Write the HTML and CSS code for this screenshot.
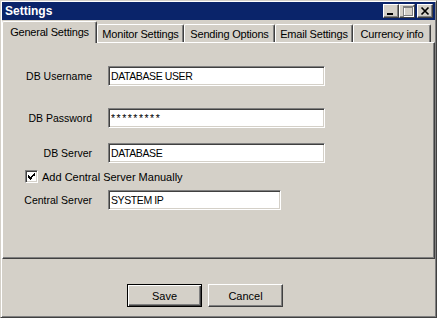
FILE: index.html
```html
<!DOCTYPE html>
<html lang="en">
<head>
    <meta charset="UTF-8">
    <meta name="viewport" content="width=device-width, initial-scale=1.0">
    <title>Settings</title>
    <link rel="stylesheet" href="styles.css">
</head>
<body>
    <div class="window">
        <div class="titlebar">
            <span class="title">Settings</span>
            <div class="caption-btns">
                <span class="cap-btn">
                    <svg width="14" height="12" viewBox="0 0 14 12" shape-rendering="crispEdges"><rect x="3" y="8" width="6" height="2" fill="#000"/></svg>
                </span>
                <span class="cap-btn">
                    <svg width="14" height="12" viewBox="0 0 14 12" shape-rendering="crispEdges">
                        <rect x="4" y="2" width="9" height="9" fill="none" stroke="#fff"/>
                        <rect x="3" y="1" width="9" height="9" fill="none" stroke="#808080"/>
                        <rect x="3" y="2" width="9" height="1" fill="#808080"/>
                    </svg>
                </span>
                <span class="cap-btn close">
                    <svg width="14" height="12" viewBox="0 0 14 12"><path d="M3.5 2.5 L10.5 9.5 M10.5 2.5 L3.5 9.5" stroke="#000" stroke-width="1.7"/></svg>
                </span>
            </div>
        </div>

        <div class="tabs">
            <div class="tab active">General Settings</div>
            <div class="tab tab-monitor">Monitor Settings</div>
            <div class="tab tab-sending">Sending Options</div>
            <div class="tab tab-email">Email Settings</div>
            <div class="tab tab-currency">Currency info</div>
        </div>

        <div class="panel">
            <div class="row row-user">
                <label>DB Username</label>
                <input type="text" class="field" value="DATABASE USER">
            </div>
            <div class="row row-pass">
                <label>DB Password</label>
                <input type="text" class="field password" value="*********">
            </div>
            <div class="row row-server">
                <label>DB Server</label>
                <input type="text" class="field" value="DATABASE">
            </div>
            <div class="check-row">
                <span class="checkbox">
                    <svg width="9" height="9" viewBox="0 0 9 9" shape-rendering="crispEdges">
                        <path d="M1 3h1v1h-1zM1 4h2v1h-2zM1 5h3v1h-3zM2 6h3v1h-3zM3 7h1v1h-1zM4 5h1v1h-1zM4 4h2v1h-2zM5 3h2v1h-2zM6 2h1v1h-1zM7 1h1v3h-1z" fill="#000"/>
                    </svg>
                </span>
                <span>Add Central Server Manually</span>
            </div>
            <div class="row row-central">
                <label>Central Server</label>
                <input type="text" class="field short" value="SYSTEM IP">
            </div>
        </div>

        <div class="footer">
            <button class="btn default">Save</button>
            <button class="btn">Cancel</button>
        </div>
    </div>
</body>
</html>
```

FILE: styles.css
```css
/* Basic reset */
* {
    margin: 0;
    padding: 0;
    box-sizing: border-box;
}

body {
    font-family: "Liberation Sans", Arial, sans-serif;
    font-size: 10.5px;
    color: #000;
    background-color: #d4d0c8;
    width: 437px;
    height: 318px;
    overflow: hidden;
}

/* Window frame */
.window {
    width: 437px;
    height: 318px;
    border: 1px solid;
    border-color: #d4d0c8 #404040 #404040 #d4d0c8;
    box-shadow: inset 1px 1px #fff, inset -1px -1px #808080;
    padding: 1px;
    display: flex;
    flex-direction: column;
}

/* Title bar */
.titlebar {
    height: 18px;
    background-color: #0a246a;
    display: flex;
    align-items: center;
    justify-content: space-between;
    padding: 0 2px 0 3px;
}

.title {
    color: #fff;
    font-weight: bold;
    font-size: 12px;
}

.caption-btns {
    display: flex;
    align-items: center;
}

.cap-btn {
    width: 16px;
    height: 14px;
    background-color: #d4d0c8;
    border: 1px solid;
    border-color: #fff #404040 #404040 #fff;
    box-shadow: inset -1px -1px #808080;
    display: flex;
}

.cap-btn.close {
    margin-left: 2px;
}

/* Tabs */
.tabs {
    height: 22px;
    display: flex;
    align-items: flex-end;
    position: relative;
    z-index: 1;
}

.tab {
    height: 18px;
    display: flex;
    align-items: center;
    justify-content: center;
    border-top: 1px solid #fff;
    border-left: 1px solid #fff;
    border-right: 1px solid #404040;
    box-shadow: inset -1px 0 #808080;
    border-radius: 2px 2px 0 0;
    white-space: nowrap;
    font-size: 11px;
    letter-spacing: -0.2px;
}

.tab.active {
    width: 95px;
    height: 22px;
    margin-bottom: -1px;
    background-color: #d4d0c8;
    padding-bottom: 1px;
}

.tab-monitor { width: 87px; }
.tab-sending { width: 91px; }
.tab-email { width: 78px; }
.tab-currency { width: 78px; }

/* Tab page */
.panel {
    height: 217px;
    border: 1px solid;
    border-color: #fff #404040 #404040 #fff;
    box-shadow: inset -1px -1px #808080;
    display: flex;
    flex-direction: column;
}

.row {
    display: flex;
    align-items: center;
}

.row label {
    width: 89px;
    margin-right: 16px;
    text-align: right;
}

.row-user { margin-top: 23px; }
.row-pass { margin-top: 22px; }
.row-server { margin-top: 15px; }
.row-central { margin-top: 7px; }

.field {
    width: 217px;
    height: 20px;
    padding: 0 2px;
    border: 1px solid;
    border-color: #808080 #fff #fff #808080;
    box-shadow: inset 1px 1px #404040, inset -1px -1px #d4d0c8;
    background-color: #fff;
    font-family: inherit;
    font-size: 10.5px;
    letter-spacing: -0.4px;
    color: #000;
    outline: none;
}

.field.short {
    width: 173px;
}

.field.password {
    letter-spacing: 1.5px;
}

/* Checkbox */
.check-row {
    display: flex;
    align-items: center;
    gap: 4px;
    margin-top: 7px;
    padding-left: 22px;
    font-size: 11px;
}

.checkbox {
    width: 13px;
    height: 13px;
    border: 1px solid;
    border-color: #808080 #fff #fff #808080;
    box-shadow: inset 1px 1px #404040, inset -1px -1px #d4d0c8;
    background-color: #fff;
    display: flex;
    align-items: center;
    justify-content: center;
}

/* Buttons */
.footer {
    flex: 1;
    display: flex;
    align-items: flex-start;
    gap: 6px;
    padding: 25px 0 0 125px;
}

.btn {
    width: 75px;
    height: 23px;
    background-color: #d4d0c8;
    border: 1px solid;
    border-color: #fff #404040 #404040 #fff;
    box-shadow: inset -1px -1px #808080;
    font-family: inherit;
    font-size: 11px;
    color: #000;
}

.btn.default {
    border-color: #000;
    box-shadow: inset 1px 1px #fff, inset -1px -1px #404040, inset -2px -2px #808080;
}
```
